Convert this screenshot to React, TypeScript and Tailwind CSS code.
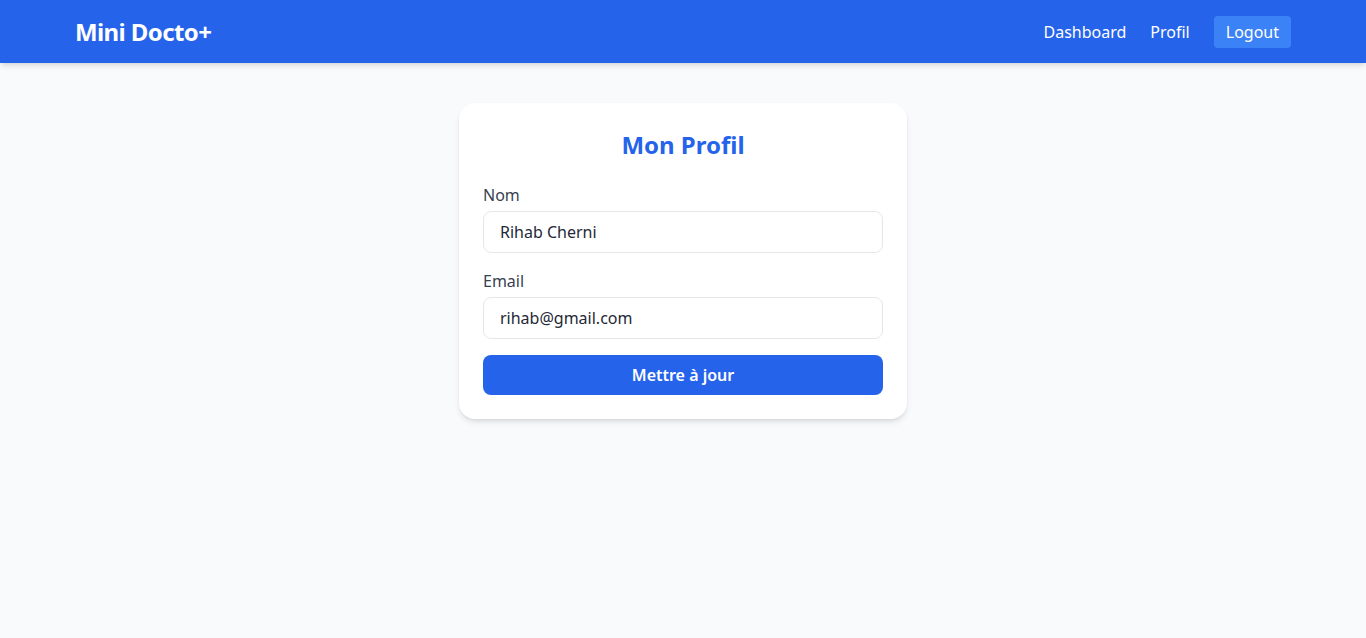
import { useState } from "react";

export default function App() {
  const [nom, setNom] = useState("Rihab Cherni");
  const [email, setEmail] = useState("rihab@gmail.com");

  return (
    <div
      className="min-h-screen bg-[#f9fafb]"
      style={{ fontFamily: '"Noto Sans", "Open Sans", sans-serif' }}
    >
      <nav className="bg-[#2563eb] shadow-md">
        <div className="max-w-7xl mx-auto px-8 h-[63px] flex items-center justify-between">
          <span className="text-2xl font-bold text-white tracking-tight">Mini Docto+</span>
          <div className="flex items-center gap-6 text-white">
            <a href="#" className="hover:underline">Dashboard</a>
            <a href="#" className="hover:underline">Profil</a>
            <button className="bg-[#3b82f6] px-3 py-1 rounded">Logout</button>
          </div>
        </div>
      </nav>

      <div className="max-w-md mx-auto mt-10 bg-white rounded-2xl shadow-md p-6">
        <h2 className="text-2xl font-bold text-[#2563eb] text-center mb-[22px] pt-0.5">Mon Profil</h2>
        <form className="space-y-4" onSubmit={(e) => e.preventDefault()}>
          <div>
            <label className="block text-[#374151] mb-1">Nom</label>
            <input
              value={nom}
              onChange={(e) => setNom(e.target.value)}
              className="w-full border border-[#e5e7eb] rounded-lg px-4 py-2 text-[#1f2937] outline-none"
            />
          </div>
          <div>
            <label className="block text-[#374151] mb-1">Email</label>
            <input
              value={email}
              onChange={(e) => setEmail(e.target.value)}
              className="w-full border border-[#e5e7eb] rounded-lg px-4 py-2 text-[#1f2937] outline-none"
            />
          </div>
          <button
            type="submit"
            className="w-full bg-[#2563eb] text-white font-semibold py-2 rounded-lg"
          >
            Mettre à jour
          </button>
        </form>
      </div>
    </div>
  );
}
